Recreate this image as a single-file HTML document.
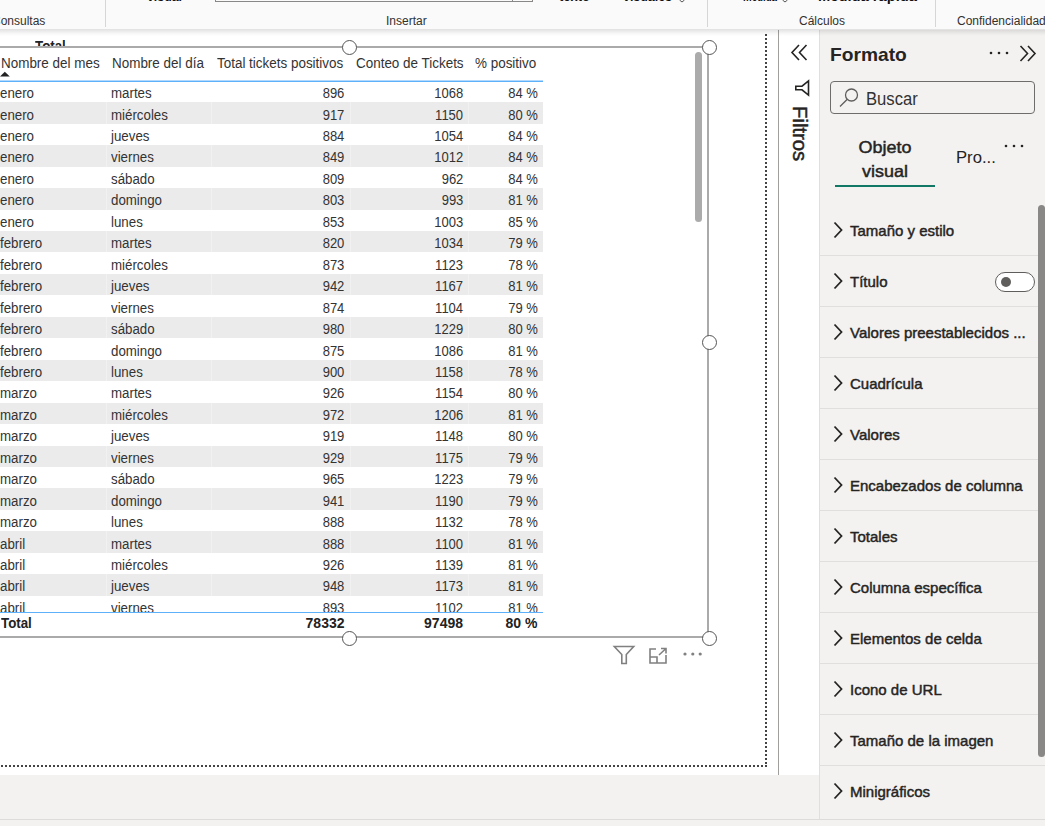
<!DOCTYPE html>
<html><head><meta charset="utf-8">
<style>
*{margin:0;padding:0;box-sizing:border-box}
html,body{width:1045px;height:826px;overflow:hidden;background:#fff;font-family:"Liberation Sans",sans-serif;color:#252423}
.abs{position:absolute}
#ribbon{position:absolute;left:0;top:0;width:1045px;height:29px;background:#fafafa}
#shadow{position:absolute;left:0;top:29px;width:1045px;height:7px;z-index:5;background:linear-gradient(rgba(0,0,0,0.12),rgba(0,0,0,0.078) 30%,rgba(0,0,0,0.03) 65%,rgba(0,0,0,0))}
.rl{position:absolute;top:13.5px;font-size:12px;color:#323130;white-space:nowrap}
.sep{position:absolute;top:0;width:1px;height:27px;background:#d6d6d6}
.topb{position:absolute;top:-10px;transform-origin:0 0;line-height:13px;font-size:13px;font-weight:bold;color:#111;white-space:nowrap}
#canvas{position:absolute;left:0;top:36px;width:778px;height:741px;background:#fff}
#bottomgray{position:absolute;left:0;top:775px;width:819px;height:44px;background:#f3f2f1}
#bottomline{position:absolute;left:0;top:819px;width:1045px;height:1px;background:#dddcdb}
#bottombar{position:absolute;left:0;top:820px;width:1045px;height:6px;background:#f3f2f1}
.dotv{position:absolute;left:765px;top:34px;width:2px;height:733px;background:repeating-linear-gradient(to bottom,#444 0 2px,transparent 2px 4px)}
.doth{position:absolute;left:-3px;top:765px;width:770px;height:2px;background:repeating-linear-gradient(to right,#444 0 2px,transparent 2px 4px)}
#fpline{position:absolute;left:778px;top:30px;width:1px;height:745px;background:#a19f9d}
#fmt{position:absolute;left:819px;top:30px;width:226px;height:789px;background:#f3f2f1;border-left:1px solid #e1dfdd}
.hdr{position:absolute;top:55px;font-size:14px;color:#333;white-space:nowrap;transform:scaleX(0.96);transform-origin:0 0}
.r{position:absolute;left:0;width:543px;height:21.45px;font-size:14px;color:#333;white-space:nowrap}
.alt{background:linear-gradient(to right,transparent 106px,#f1f1f1 106px 107px,transparent 107px 211px,#f1f1f1 211px 212px,transparent 212px 350px,#f1f1f1 350px 351px,transparent 351px 468px,#f1f1f1 468px 469px,transparent 469px),#ebebeb}
.r i,.r b{position:absolute;top:4.3px;font-style:normal;font-weight:normal}
.r i{transform:scaleX(0.95);transform-origin:0 0}
.r b{transform:scaleX(0.93);transform-origin:100% 0}
.c1{left:-0.5px}.c2{left:111px}
.c3{right:198.5px}.c4{right:80px}.c5{right:5.5px}
.tot b,.tot i{font-weight:bold}
.tot b{transform:none}
#rowsclip{position:absolute;left:0;top:82px;width:543px;height:530px;overflow:hidden}
.handle{position:absolute;width:15px;height:15px;border-radius:50%;border:1px solid #555;background:#fff}
.it{position:absolute;left:820px;width:225px;height:51px;border-bottom:1px solid #e1dfdd}
.chev{position:absolute;left:11.5px;top:16px}
.lbl{position:absolute;left:30px;top:16.5px;font-size:15px;color:#252423;white-space:nowrap;-webkit-text-stroke:0.45px #252423}
.tog{position:absolute;left:175px;top:15.5px;width:40px;height:20px;border:1px solid #605e5c;border-radius:10px;background:#fff}
.knob{position:absolute;left:5px;top:4px;width:10px;height:10px;border-radius:50%;background:#605e5c}
.sb{-webkit-text-stroke:0.45px currentColor}
</style></head><body>
<div id="ribbon"></div>
<span class="topb" style="left:147px;transform:scaleX(0.950)">visual</span>
<span class="topb" style="left:559px;transform:scaleX(0.998)">texto</span>
<span class="topb" style="left:623px;transform:scaleX(0.955)">visuales</span>
<span class="topb" style="left:743px;transform:scaleX(0.747)">medida</span>
<span class="topb" style="left:818px;transform:scaleX(1.133)">Medida rápida</span>
<svg class="abs" style="left:679px;top:0" width="6" height="3"><path d="M0.5 0 L3 2 L5.5 0" fill="none" stroke="#555" stroke-width="1"/></svg>
<svg class="abs" style="left:782px;top:0" width="6" height="3"><path d="M0.5 0 L3 2 L5.5 0" fill="none" stroke="#555" stroke-width="1"/></svg>
<div class="abs" style="left:215px;top:0;width:318px;height:2px;border-bottom:1px solid #8a8886;border-left:1px solid #8a8886;border-right:1px solid #8a8886"></div>
<div class="abs" style="left:512px;top:0;width:1px;height:2px;background:#8a8886"></div>
<span class="rl" style="left:-8px">Consultas</span>
<div class="sep" style="left:105px"></div>
<span class="rl" style="left:386px">Insertar</span>
<div class="sep" style="left:707px"></div>
<span class="rl" style="left:799px">Cálculos</span>
<div class="sep" style="left:935px"></div>
<span class="rl" style="left:957px">Confidencialidad</span>

<div id="canvas"></div>
<div id="shadow"></div>
<div class="dotv"></div>
<div class="doth"></div>
<div id="bottomgray"></div>
<div id="bottombar"></div>
<div id="fpline"></div>

<!-- table -->
<span class="abs" style="left:35px;top:37.5px;font-size:14px;font-weight:bold;color:#222;height:8.5px;overflow:hidden;line-height:16px;transform:scaleX(0.95);transform-origin:0 0">Total</span>
<span class="hdr" style="left:1px">Nombre del mes</span>
<span class="hdr" style="left:111.5px">Nombre del día</span>
<span class="hdr" style="left:217px">Total tickets positivos</span>
<span class="hdr" style="left:356px">Conteo de Tickets</span>
<span class="hdr" style="left:475px">% positivo</span>
<svg class="abs" style="left:0;top:71px" width="11" height="6"><path d="M0 5.5 L4.8 0.8 L9.8 5.5Z" fill="#222"/></svg>
<div class="abs" style="left:0;top:80px;width:543px;height:2px;background:linear-gradient(#b3d9fc 50%,#5db1fb 50%)"></div>
<div id="rowsclip">
<div style="position:absolute;left:0;top:-82px;width:543px">
<div class="r" style="top:80.85px"><i class="c1">enero</i><i class="c2">martes</i><b class="c3">896</b><b class="c4">1068</b><b class="c5">84 %</b></div>
<div class="r alt" style="top:102.30px"><i class="c1">enero</i><i class="c2">miércoles</i><b class="c3">917</b><b class="c4">1150</b><b class="c5">80 %</b></div>
<div class="r" style="top:123.75px"><i class="c1">enero</i><i class="c2">jueves</i><b class="c3">884</b><b class="c4">1054</b><b class="c5">84 %</b></div>
<div class="r alt" style="top:145.20px"><i class="c1">enero</i><i class="c2">viernes</i><b class="c3">849</b><b class="c4">1012</b><b class="c5">84 %</b></div>
<div class="r" style="top:166.65px"><i class="c1">enero</i><i class="c2">sábado</i><b class="c3">809</b><b class="c4">962</b><b class="c5">84 %</b></div>
<div class="r alt" style="top:188.10px"><i class="c1">enero</i><i class="c2">domingo</i><b class="c3">803</b><b class="c4">993</b><b class="c5">81 %</b></div>
<div class="r" style="top:209.55px"><i class="c1">enero</i><i class="c2">lunes</i><b class="c3">853</b><b class="c4">1003</b><b class="c5">85 %</b></div>
<div class="r alt" style="top:231.00px"><i class="c1">febrero</i><i class="c2">martes</i><b class="c3">820</b><b class="c4">1034</b><b class="c5">79 %</b></div>
<div class="r" style="top:252.45px"><i class="c1">febrero</i><i class="c2">miércoles</i><b class="c3">873</b><b class="c4">1123</b><b class="c5">78 %</b></div>
<div class="r alt" style="top:273.90px"><i class="c1">febrero</i><i class="c2">jueves</i><b class="c3">942</b><b class="c4">1167</b><b class="c5">81 %</b></div>
<div class="r" style="top:295.35px"><i class="c1">febrero</i><i class="c2">viernes</i><b class="c3">874</b><b class="c4">1104</b><b class="c5">79 %</b></div>
<div class="r alt" style="top:316.80px"><i class="c1">febrero</i><i class="c2">sábado</i><b class="c3">980</b><b class="c4">1229</b><b class="c5">80 %</b></div>
<div class="r" style="top:338.25px"><i class="c1">febrero</i><i class="c2">domingo</i><b class="c3">875</b><b class="c4">1086</b><b class="c5">81 %</b></div>
<div class="r alt" style="top:359.70px"><i class="c1">febrero</i><i class="c2">lunes</i><b class="c3">900</b><b class="c4">1158</b><b class="c5">78 %</b></div>
<div class="r" style="top:381.15px"><i class="c1">marzo</i><i class="c2">martes</i><b class="c3">926</b><b class="c4">1154</b><b class="c5">80 %</b></div>
<div class="r alt" style="top:402.60px"><i class="c1">marzo</i><i class="c2">miércoles</i><b class="c3">972</b><b class="c4">1206</b><b class="c5">81 %</b></div>
<div class="r" style="top:424.05px"><i class="c1">marzo</i><i class="c2">jueves</i><b class="c3">919</b><b class="c4">1148</b><b class="c5">80 %</b></div>
<div class="r alt" style="top:445.50px"><i class="c1">marzo</i><i class="c2">viernes</i><b class="c3">929</b><b class="c4">1175</b><b class="c5">79 %</b></div>
<div class="r" style="top:466.95px"><i class="c1">marzo</i><i class="c2">sábado</i><b class="c3">965</b><b class="c4">1223</b><b class="c5">79 %</b></div>
<div class="r alt" style="top:488.40px"><i class="c1">marzo</i><i class="c2">domingo</i><b class="c3">941</b><b class="c4">1190</b><b class="c5">79 %</b></div>
<div class="r" style="top:509.85px"><i class="c1">marzo</i><i class="c2">lunes</i><b class="c3">888</b><b class="c4">1132</b><b class="c5">78 %</b></div>
<div class="r alt" style="top:531.30px"><i class="c1">abril</i><i class="c2">martes</i><b class="c3">888</b><b class="c4">1100</b><b class="c5">81 %</b></div>
<div class="r" style="top:552.75px"><i class="c1">abril</i><i class="c2">miércoles</i><b class="c3">926</b><b class="c4">1139</b><b class="c5">81 %</b></div>
<div class="r alt" style="top:574.20px"><i class="c1">abril</i><i class="c2">jueves</i><b class="c3">948</b><b class="c4">1173</b><b class="c5">81 %</b></div>
<div class="r" style="top:595.65px"><i class="c1">abril</i><i class="c2">viernes</i><b class="c3">893</b><b class="c4">1102</b><b class="c5">81 %</b></div>
</div>
</div>
<div class="abs" style="left:0;top:611.5px;width:543px;height:1.5px;background:#5db1fb"></div>
<div class="r tot" style="top:611px;color:#222"><i class="c1" style="left:1px">Total</i><b class="c3">78332</b><b class="c4">97498</b><b class="c5">80 %</b></div>

<!-- frame -->
<div class="abs" style="left:0;top:46px;width:709px;height:2px;background:#aaa"></div>
<div class="abs" style="left:707px;top:46px;width:2px;height:592px;background:#aaa"></div>
<div class="abs" style="left:0;top:636px;width:709px;height:2px;background:#aaa"></div>
<div class="abs" style="left:695px;top:52px;width:7px;height:170px;border-radius:3.5px;background:#ababab"></div>
<div class="handle" style="left:701.5px;top:39.5px"></div>
<div class="handle" style="left:341.5px;top:39.5px"></div>
<div class="handle" style="left:701.5px;top:334.5px"></div>
<div class="handle" style="left:701.5px;top:630.5px"></div>
<div class="handle" style="left:341.5px;top:630.5px"></div>
<!-- visual header icons -->
<svg class="abs" style="left:612px;top:645px" width="24" height="20" viewBox="0 0 24 20"><path d="M2.3 1.5 H21.7 L14.3 9.5 V18.5 H9.8 V9.5 Z" fill="none" stroke="#808080" stroke-width="1.6"/></svg>
<svg class="abs" style="left:648px;top:647px" width="21" height="18" viewBox="0 0 21 18"><path d="M8 2 H2 V16 H18 V8 M2 10 H9 V16" fill="none" stroke="#808080" stroke-width="1.6"/><path d="M11 8 L18 1.5 M13 1.5 H18 V6.5" fill="none" stroke="#808080" stroke-width="1.6"/></svg>
<svg class="abs" style="left:682px;top:651px" width="22" height="6"><circle cx="3" cy="3" r="1.6" fill="#808080"/><circle cx="10.8" cy="3" r="1.6" fill="#808080"/><circle cx="18.2" cy="3" r="1.6" fill="#808080"/></svg>

<!-- filters pane -->
<svg class="abs" style="left:790px;top:43px" width="20" height="19" viewBox="0 0 20 19"><path d="M9 2 L2 9.5 L9 17 M16.5 2 L9.5 9.5 L16.5 17" fill="none" stroke="#252423" stroke-width="1.6"/></svg>
<svg class="abs" style="left:794px;top:79px" width="17" height="18" viewBox="0 0 17 18"><path d="M14.5 2 V16 L8 10.8 H1.8 V7.2 H8 Z" fill="none" stroke="#252423" stroke-width="1.6" stroke-linejoin="miter"/></svg>
<div class="abs sb" style="left:810px;top:106px;transform-origin:0 0;transform:rotate(90deg) scaleX(1.04);font-size:19.5px;color:#252423;white-space:nowrap;line-height:20px">Filtros</div>

<!-- format pane -->
<div id="fmt"></div>
<span class="abs" style="left:830px;top:43.5px;font-size:19px;font-weight:bold;color:#252423;white-space:nowrap;transform:scaleX(1.01);transform-origin:0 0">Formato</span>
<svg class="abs" style="left:988px;top:50px" width="24" height="6"><circle cx="3" cy="3" r="1.3" fill="#252423"/><circle cx="11" cy="3" r="1.3" fill="#252423"/><circle cx="19" cy="3" r="1.3" fill="#252423"/></svg>
<svg class="abs" style="left:1017px;top:44px" width="20" height="19" viewBox="0 0 20 19"><path d="M3.5 2 L10.5 9.5 L3.5 17 M11 2 L18 9.5 L11 17" fill="none" stroke="#252423" stroke-width="1.6"/></svg>
<div class="abs" style="left:830px;top:81px;width:205px;height:33px;border:1px solid #6f6d6b;border-radius:4px;background:#f3f2f1"></div>
<svg class="abs" style="left:838px;top:86px" width="22" height="24" viewBox="0 0 22 24"><circle cx="13.5" cy="9" r="6" fill="none" stroke="#605e5c" stroke-width="1.3"/><path d="M9.3 13.3 L2 20.5" stroke="#605e5c" stroke-width="1.3"/></svg>
<span class="abs" style="left:866px;top:89px;font-size:17.5px;color:#323130;white-space:nowrap;transform:scaleX(0.95);transform-origin:0 0">Buscar</span>
<span class="abs sb" style="left:855px;top:136px;font-size:16.5px;color:#252423;white-space:nowrap;text-align:center;width:60px;line-height:23.5px;transform:scaleX(1.09);transform-origin:50% 0">Objeto<br>visual</span>
<span class="abs" style="left:955.5px;top:148px;font-size:17px;color:#252423;white-space:nowrap;transform:scaleX(0.98);transform-origin:0 0">Pro...</span>
<svg class="abs" style="left:1003px;top:143px" width="24" height="6"><circle cx="3" cy="3" r="1.3" fill="#252423"/><circle cx="11" cy="3" r="1.3" fill="#252423"/><circle cx="19" cy="3" r="1.3" fill="#252423"/></svg>
<div class="abs" style="left:835px;top:185px;width:100px;height:2px;background:#117865"></div>
<div class="it" style="top:205px"><svg class="chev" width="12" height="18" viewBox="0 0 12 18"><path d="M2.5 1.5 L9.5 9 L2.5 16.5" fill="none" stroke="#252423" stroke-width="1.8"/></svg><span class="lbl">Tamaño y estilo</span></div>
<div class="it" style="top:256px"><svg class="chev" width="12" height="18" viewBox="0 0 12 18"><path d="M2.5 1.5 L9.5 9 L2.5 16.5" fill="none" stroke="#252423" stroke-width="1.8"/></svg><span class="lbl">Título</span><div class="tog"><div class="knob"></div></div></div>
<div class="it" style="top:307px"><svg class="chev" width="12" height="18" viewBox="0 0 12 18"><path d="M2.5 1.5 L9.5 9 L2.5 16.5" fill="none" stroke="#252423" stroke-width="1.8"/></svg><span class="lbl">Valores preestablecidos ...</span></div>
<div class="it" style="top:358px"><svg class="chev" width="12" height="18" viewBox="0 0 12 18"><path d="M2.5 1.5 L9.5 9 L2.5 16.5" fill="none" stroke="#252423" stroke-width="1.8"/></svg><span class="lbl">Cuadrícula</span></div>
<div class="it" style="top:409px"><svg class="chev" width="12" height="18" viewBox="0 0 12 18"><path d="M2.5 1.5 L9.5 9 L2.5 16.5" fill="none" stroke="#252423" stroke-width="1.8"/></svg><span class="lbl">Valores</span></div>
<div class="it" style="top:460px"><svg class="chev" width="12" height="18" viewBox="0 0 12 18"><path d="M2.5 1.5 L9.5 9 L2.5 16.5" fill="none" stroke="#252423" stroke-width="1.8"/></svg><span class="lbl">Encabezados de columna</span></div>
<div class="it" style="top:511px"><svg class="chev" width="12" height="18" viewBox="0 0 12 18"><path d="M2.5 1.5 L9.5 9 L2.5 16.5" fill="none" stroke="#252423" stroke-width="1.8"/></svg><span class="lbl">Totales</span></div>
<div class="it" style="top:562px"><svg class="chev" width="12" height="18" viewBox="0 0 12 18"><path d="M2.5 1.5 L9.5 9 L2.5 16.5" fill="none" stroke="#252423" stroke-width="1.8"/></svg><span class="lbl">Columna específica</span></div>
<div class="it" style="top:613px"><svg class="chev" width="12" height="18" viewBox="0 0 12 18"><path d="M2.5 1.5 L9.5 9 L2.5 16.5" fill="none" stroke="#252423" stroke-width="1.8"/></svg><span class="lbl">Elementos de celda</span></div>
<div class="it" style="top:664px"><svg class="chev" width="12" height="18" viewBox="0 0 12 18"><path d="M2.5 1.5 L9.5 9 L2.5 16.5" fill="none" stroke="#252423" stroke-width="1.8"/></svg><span class="lbl">Icono de URL</span></div>
<div class="it" style="top:715px"><svg class="chev" width="12" height="18" viewBox="0 0 12 18"><path d="M2.5 1.5 L9.5 9 L2.5 16.5" fill="none" stroke="#252423" stroke-width="1.8"/></svg><span class="lbl">Tamaño de la imagen</span></div>
<div class="it" style="top:766px;border-bottom:none"><svg class="chev" width="12" height="18" viewBox="0 0 12 18"><path d="M2.5 1.5 L9.5 9 L2.5 16.5" fill="none" stroke="#252423" stroke-width="1.8"/></svg><span class="lbl">Minigráficos</span></div>
<div class="abs" style="left:1038px;top:205px;width:7px;height:552px;border-radius:3.5px;background:#8a8886"></div>
<div id="bottomline"></div>
</body></html>
